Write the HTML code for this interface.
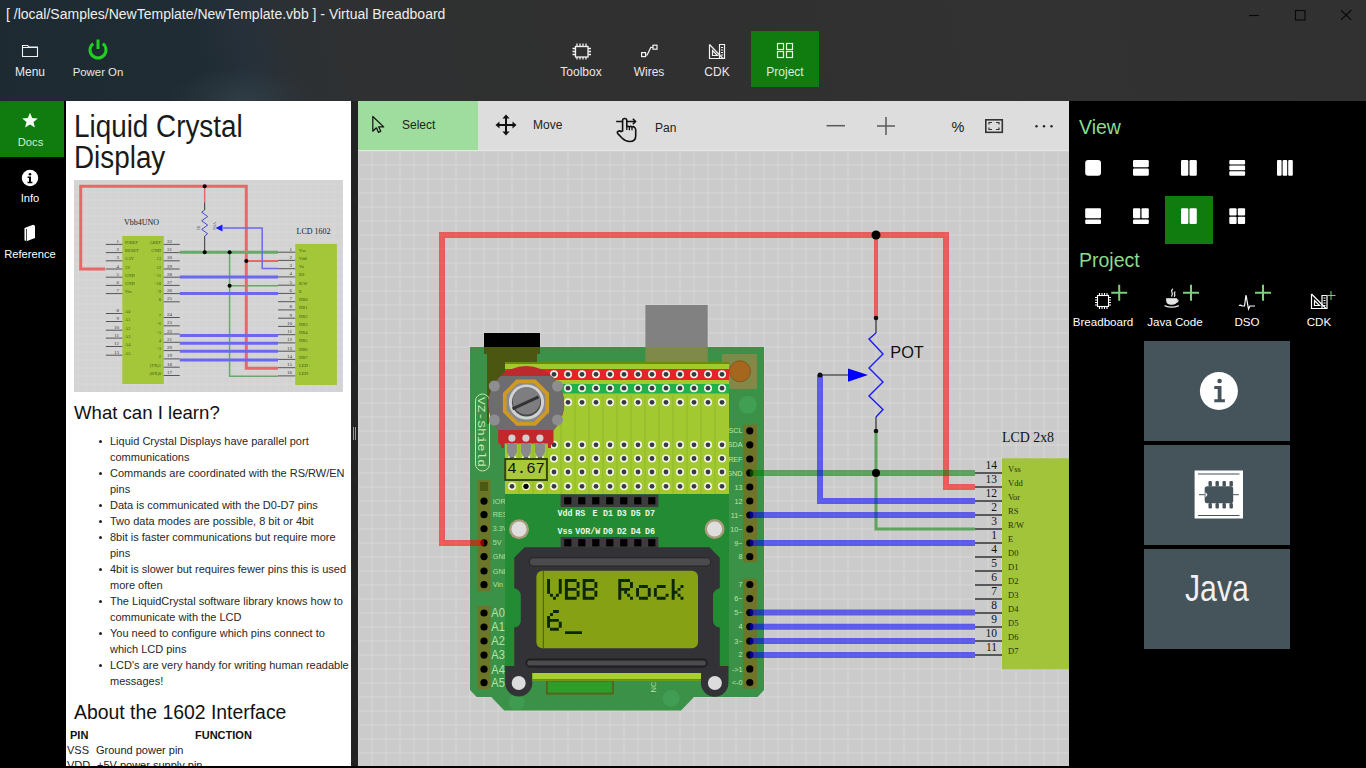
<!DOCTYPE html>
<html><head><meta charset="utf-8">
<style>
*{box-sizing:border-box}
html,body{margin:0;padding:0}
body{width:1366px;height:768px;overflow:hidden;position:relative;background:#000;font-family:"Liberation Sans",sans-serif}
.a{position:absolute}
#top{left:0;top:0;width:1366px;height:101px;
background:
 radial-gradient(ellipse 70px 30px at 240px 98px, rgba(80,100,105,.25), rgba(0,0,0,0)),
 linear-gradient(80deg,#1e2a31 0px,#202c33 200px,#25303a 250px,#2c3033 300px,#2f3031 380px,#303030 700px,#323232 1000px,#313131 1366px);}
.tt{color:#eee;white-space:nowrap}
.tb{color:#e8e8e8;font-size:12px;white-space:nowrap;text-align:center}
#nav{left:0;top:101px;width:64px;height:665px;background:#000}
#docs{left:66px;top:101px;width:285px;height:665px;background:#fff;overflow:hidden;color:#111}
#div{left:351px;top:101px;width:7px;height:665px;background:#232323}
#cv{left:358px;top:101px;width:711px;height:665px;overflow:hidden;background:#cbcbcb}
#rp{left:1069px;top:101px;width:297px;height:665px;background:#000}
.li{position:absolute;left:44px;font-size:11px;color:#282828;white-space:nowrap}
.bu{position:absolute;left:33px;width:3px;height:3px;border-radius:50%;background:#222}
</style></head><body>
<div id="top" class="a">
  <div class="a tt" style="left:6px;top:5px;font-size:14px;line-height:18px">[ /local/Samples/NewTemplate/NewTemplate.vbb ] - Virtual Breadboard</div>
  <svg class="a" style="left:1240px;top:0" width="126" height="30" viewBox="1240 0 126 30">
    <path d="M1249 15.5h10" stroke="#0a0a0a" stroke-width="1.2"/>
    <rect x="1295.5" y="10.5" width="9.5" height="9.5" fill="none" stroke="#0a0a0a" stroke-width="1.2"/>
    <path d="M1341 10.3l10.3 9.6M1351.3 10.3l-10.3 9.6" stroke="#0a0a0a" stroke-width="1.2"/>
  </svg>
  <!-- Menu -->
  <svg class="a" style="left:20px;top:42px" width="20" height="18" viewBox="20 42 20 18">
    <path d="M22.5 56.5V45.5h5l1.5 1.5h8.5v9.5z M22.5 47.5h15" fill="none" stroke="#f0f0f0" stroke-width="1.1"/>
  </svg>
  <div class="a tb" style="left:0;top:65px;width:60px;line-height:14px">Menu</div>
  <!-- Power -->
  <svg class="a" style="left:86px;top:37px" width="24" height="24" viewBox="86 37 24 24">
    <path d="M93.2 43.6A8 8 0 1 0 102.8 43.6" fill="none" stroke="#22d022" stroke-width="3"/>
    <path d="M98 39.5v9.5" stroke="#22d022" stroke-width="3"/>
  </svg>
  <div class="a tb" style="left:64px;top:65px;width:68px;line-height:14px;font-size:11.4px">Power On</div>
  <!-- Project highlight -->
  <div class="a" style="left:751px;top:31px;width:68px;height:56px;background:#107c10"></div>
  <svg class="a" style="left:560px;top:38px" width="250" height="26" viewBox="560 38 250 26">
    <!-- toolbox chip -->
    <g fill="none" stroke="#f2f2f2" stroke-width="1.3">
      <rect x="575.5" y="46.5" width="12.5" height="10.5"/>
      <path d="M577 43.5v3M580 43.5v3M583 43.5v3M586 43.5v3 M577 57v2.5M580 57v2.5M583 57v2.5M586 57v2.5 M572.5 48.5h3M572.5 51.5h3M572.5 54.5h3 M588 48.5h3M588 51.5h3M588 54.5h3"/>
    </g>
    <!-- wires -->
    <g fill="none" stroke="#f2f2f2" stroke-width="1.2">
      <rect x="641.6" y="52.6" width="4" height="4"/>
      <rect x="653" y="45.2" width="4" height="4"/>
      <path d="M645.6 55h1.6l3.6-7.6h2.2"/>
    </g>
    <!-- CDK -->
    <g fill="none" stroke="#f2f2f2" stroke-width="1.2">
      <path d="M709.5 44.5v14h15v-14h-5v14"/>
      <path d="M709.5 44.5l13.5 14"/>
      <path d="M712.5 50.5v5h5z"/>
      <path d="M721 47.5h2M721 50h2M721 52.5h2M721 55h2"/>
    </g>
    <!-- project grid -->
    <g fill="none" stroke="#eaf5ea" stroke-width="1.2">
      <rect x="777.5" y="43.5" width="6" height="6"/>
      <rect x="786.5" y="43.5" width="6" height="6"/>
      <rect x="777.5" y="51.5" width="6" height="6"/>
      <rect x="786.5" y="51.5" width="6" height="6"/>
    </g>
  </svg>
  <div class="a tb" style="left:547px;top:65px;width:68px;line-height:14px">Toolbox</div>
  <div class="a tb" style="left:615px;top:65px;width:68px;line-height:14px">Wires</div>
  <div class="a tb" style="left:683px;top:65px;width:68px;line-height:14px">CDK</div>
  <div class="a tb" style="left:751px;top:65px;width:68px;line-height:14px;color:#d8f0d8">Project</div>
</div>
<div id="nav" class="a">
  <div class="a" style="left:0;top:0;width:64px;height:56px;background:#107c10"></div>
  <svg class="a" style="left:0;top:0" width="64" height="160" viewBox="0 101 64 160">
    <path d="M30 112.8l2.2 5.2 5.6.4-4.3 3.6 1.4 5.5-4.9-3-4.9 3 1.4-5.5-4.3-3.6 5.6-.4z" fill="#f4fff4"/>
    <circle cx="30" cy="178" r="8.2" fill="#fff"/>
    <circle cx="30" cy="174.2" r="1.3" fill="#000"/>
    <path d="M27.6 176.6h3.4v5.2h1.4v1.4h-4.8v-1.4h1.4v-3.8h-1.4z" fill="#000"/>
    <path d="M24.5 228l8.5-3.2 2 .9v12.3l-8.5 3.2-2-.9z" fill="#fff"/>
    <path d="M26.5 228.9v12.2" fill="none" stroke="#000" stroke-width=".7"/>
  </svg>
  <div class="a tb" style="left:0;top:34px;width:61px;line-height:14px;font-size:11.2px;color:#d0f2d0">Docs</div>
  <div class="a tb" style="left:0;top:90px;width:60px;line-height:14px;font-size:11.2px;color:#fff">Info</div>
  <div class="a tb" style="left:0;top:146px;width:60px;line-height:14px;font-size:11.2px;color:#fff">Reference</div>
</div>
<div id="docs" class="a">
  <div class="a" style="left:8px;top:9.5px;font-size:30.6px;line-height:31px;color:#1a1a1a;white-space:nowrap;transform:scaleX(.91);transform-origin:0 0">Liquid Crystal<br>Display</div>
  <svg class="a" style="left:8px;top:79px" width="269" height="212" viewBox="74 180 269 212" id="sch"><rect x="74" y="180" width="269" height="212" fill="#d3d3d3"/><path d="M78 180v212M86 180v212M94 180v212M102 180v212M110 180v212M118 180v212M126 180v212M134 180v212M142 180v212M150 180v212M158 180v212M166 180v212M174 180v212M182 180v212M190 180v212M198 180v212M206 180v212M214 180v212M222 180v212M230 180v212M238 180v212M246 180v212M254 180v212M262 180v212M270 180v212M278 180v212M286 180v212M294 180v212M302 180v212M310 180v212M318 180v212M326 180v212M334 180v212M342 180v212M74 184h269M74 192h269M74 200h269M74 208h269M74 216h269M74 224h269M74 232h269M74 240h269M74 248h269M74 256h269M74 264h269M74 272h269M74 280h269M74 288h269M74 296h269M74 304h269M74 312h269M74 320h269M74 328h269M74 336h269M74 344h269M74 352h269M74 360h269M74 368h269M74 376h269M74 384h269" stroke="#dcdcdc" stroke-width=".6"/><rect x="122.3" y="236" width="41.5" height="148" fill="#a4c639"/><rect x="295.2" y="244" width="41.7" height="141" fill="#a4c639"/><path d="M105.9 244.4H122.3M105.9 252.6H122.3M105.9 260.8H122.3M105.9 269.0H122.3M105.9 277.2H122.3M105.9 285.4H122.3M105.9 293.6H122.3M105.9 313.5H122.3M105.9 321.5H122.3M105.9 330.2H122.3M105.9 338.1H122.3M105.9 346.5H122.3M105.9 355.2H122.3M163.8 244.4H179.7M163.8 252.6H179.7M163.8 260.8H179.7M163.8 269.0H179.7M163.8 277.2H179.7M163.8 285.4H179.7M163.8 293.6H179.7M163.8 301.8H179.7M163.8 317.5H179.7M163.8 325.8H179.7M163.8 334.0H179.7M163.8 342.3H179.7M163.8 350.6H179.7M163.8 358.9H179.7M163.8 367.2H179.7M163.8 375.5H179.7M278 252.2H295.2M278 260.4H295.2M278 268.7H295.2M278 276.9H295.2M278 285.2H295.2M278 293.4H295.2M278 301.7H295.2M278 309.9H295.2M278 318.2H295.2M278 326.4H295.2M278 334.7H295.2M278 342.9H295.2M278 351.2H295.2M278 359.4H295.2M278 367.7H295.2M278 375.9H295.2" stroke="#555" stroke-width="1"/><g font-family="Liberation Serif" font-size="5" fill="#333"><text x="119" y="242.9" text-anchor="end">1</text><text x="119" y="251.1" text-anchor="end">2</text><text x="119" y="259.3" text-anchor="end">3</text><text x="119" y="267.5" text-anchor="end">4</text><text x="119" y="275.7" text-anchor="end">5</text><text x="119" y="283.9" text-anchor="end">6</text><text x="119" y="292.1" text-anchor="end">7</text><text x="119" y="312.0" text-anchor="end">8</text><text x="119" y="320.0" text-anchor="end">9</text><text x="119" y="328.7" text-anchor="end">10</text><text x="119" y="336.6" text-anchor="end">11</text><text x="119" y="345.0" text-anchor="end">12</text><text x="119" y="353.7" text-anchor="end">13</text><text x="167" y="242.9">32</text><text x="167" y="251.1">31</text><text x="167" y="259.3">30</text><text x="167" y="267.5">29</text><text x="167" y="275.7">28</text><text x="167" y="283.9">27</text><text x="167" y="292.1">26</text><text x="167" y="300.3">25</text><text x="167" y="316.0">24</text><text x="167" y="324.3">23</text><text x="167" y="332.5">22</text><text x="167" y="340.8">21</text><text x="167" y="349.1">20</text><text x="167" y="357.4">19</text><text x="167" y="365.7">18</text><text x="167" y="374.0">17</text><text x="292" y="250.7" text-anchor="end">1</text><text x="292" y="258.9" text-anchor="end">2</text><text x="292" y="267.2" text-anchor="end">3</text><text x="292" y="275.4" text-anchor="end">4</text><text x="292" y="283.7" text-anchor="end">5</text><text x="292" y="291.9" text-anchor="end">6</text><text x="292" y="300.2" text-anchor="end">7</text><text x="292" y="308.4" text-anchor="end">8</text><text x="292" y="316.7" text-anchor="end">9</text><text x="292" y="324.9" text-anchor="end">10</text><text x="292" y="333.2" text-anchor="end">11</text><text x="292" y="341.4" text-anchor="end">12</text><text x="292" y="349.7" text-anchor="end">13</text><text x="292" y="357.9" text-anchor="end">14</text><text x="292" y="366.2" text-anchor="end">15</text><text x="292" y="374.4" text-anchor="end">16</text></g><g font-family="Liberation Serif" font-size="4.5" fill="#3a5a10"><text x="125" y="243.9">IOREF</text><text x="125" y="252.1">RESET</text><text x="125" y="260.3">3.3V</text><text x="125" y="268.5">5V</text><text x="125" y="276.7">GND</text><text x="125" y="284.9">GND</text><text x="125" y="293.1">Vin</text><text x="125" y="313.0">A0</text><text x="125" y="321.0">A1</text><text x="125" y="329.7">A2</text><text x="125" y="337.6">A3</text><text x="125" y="346.0">A4</text><text x="125" y="354.7">A5</text><text x="161" y="243.9" text-anchor="end">AREF</text><text x="161" y="252.1" text-anchor="end">GND</text><text x="161" y="260.3" text-anchor="end">13</text><text x="161" y="268.5" text-anchor="end">12</text><text x="161" y="276.7" text-anchor="end">~11</text><text x="161" y="284.9" text-anchor="end">~10</text><text x="161" y="293.1" text-anchor="end">~9</text><text x="161" y="301.3" text-anchor="end">8</text><text x="161" y="317.0" text-anchor="end">7</text><text x="161" y="325.3" text-anchor="end">~6</text><text x="161" y="333.5" text-anchor="end">~5</text><text x="161" y="341.8" text-anchor="end">4</text><text x="161" y="350.1" text-anchor="end">~3</text><text x="161" y="358.4" text-anchor="end">2</text><text x="161" y="366.7" text-anchor="end">(TX)1</text><text x="161" y="375.0" text-anchor="end">(RX)0</text><text x="299" y="251.7">Vss</text><text x="299" y="259.9">Vdd</text><text x="299" y="268.2">Vo</text><text x="299" y="276.4">RS</text><text x="299" y="284.7">R/W</text><text x="299" y="292.9">E</text><text x="299" y="301.2">DB0</text><text x="299" y="309.4">DB1</text><text x="299" y="317.7">DB2</text><text x="299" y="325.9">DB3</text><text x="299" y="334.2">DB4</text><text x="299" y="342.4">DB5</text><text x="299" y="350.7">DB6</text><text x="299" y="358.9">DB7</text><text x="299" y="367.2">LED+</text><text x="299" y="375.4">LED-</text></g><text x="141.6" y="225" font-family="Liberation Serif" font-size="8" fill="#222" text-anchor="middle">Vbb4UNO</text><text x="313.5" y="233.5" font-family="Liberation Serif" font-size="8" fill="#222" text-anchor="middle">LCD 1602</text><path d="M105.2 268.9H80.7V186.2H246.3V368.3H278" fill="none" stroke="#e8686a" stroke-width="3"/><path d="M246.3 261H278" stroke="#e8686a" stroke-width="2"/><path d="M204.7 186.2V202.5" stroke="#e8686a" stroke-width="1.5"/><path d="M204.7 202.5V210M204.7 236V252" stroke="#333" stroke-width="1"/><path d="M204.7 210l-3 2.2 6 4.3-6 4.3 6 4.3-6 4.3 6 4.3-3 2.3" fill="none" stroke="#3535d8" stroke-width=".9"/><path d="M179.7 252.2H278" stroke="#6aa86a" stroke-width="3"/><path d="M229.6 252.2V376.3H278M229.6 285.7H278" fill="none" stroke="#6aa86a" stroke-width="1.5"/><path d="M223 228H262.2V268.6H278" fill="none" stroke="#6b68ee" stroke-width="1.5"/><path d="M215.5 228l7-3.5v7z" fill="#1a1aff"/><path d="M179.7 277H278" stroke="#6b68ee" stroke-width="3"/><path d="M179.7 293.6H278" stroke="#6b68ee" stroke-width="3"/><path d="M179.7 335.4H278" stroke="#6b68ee" stroke-width="3"/><path d="M179.7 343.3H278" stroke="#6b68ee" stroke-width="3"/><path d="M179.7 351.3H278" stroke="#6b68ee" stroke-width="3"/><path d="M179.7 360H278" stroke="#6b68ee" stroke-width="3"/><text x="197" y="226" font-family="Liberation Serif" font-size="4" fill="#444" transform="rotate(90 197 226)">R1</text><text x="213" y="222" font-family="Liberation Serif" font-size="4" fill="#444" transform="rotate(90 213 222)">VPot</text><circle cx="204.7" cy="186.2" r="2" fill="#000"/><circle cx="204.7" cy="252.2" r="2" fill="#000"/><circle cx="229.6" cy="252.2" r="2" fill="#000"/><circle cx="246.3" cy="261" r="2" fill="#000"/><circle cx="229.6" cy="285.7" r="2" fill="#000"/></svg>
  <div class="a" style="left:8px;top:301px;font-size:18.6px;line-height:22px;color:#111;white-space:nowrap">What can I learn?</div>
  <div class="li" style="top:332px;line-height:16px">Liquid Crystal Displays have parallel port</div>
  <div class="bu" style="top:339px"></div>
  <div class="li" style="top:348px;line-height:16px">communications</div>
  <div class="li" style="top:364px;line-height:16px">Commands are coordinated with the RS/RW/EN</div>
  <div class="bu" style="top:371px"></div>
  <div class="li" style="top:380px;line-height:16px">pins</div>
  <div class="li" style="top:396px;line-height:16px">Data is communicated with the D0-D7 pins</div>
  <div class="bu" style="top:403px"></div>
  <div class="li" style="top:412px;line-height:16px">Two data modes are possible, 8 bit or 4bit</div>
  <div class="bu" style="top:419px"></div>
  <div class="li" style="top:428px;line-height:16px">8bit is faster communications but require more</div>
  <div class="bu" style="top:435px"></div>
  <div class="li" style="top:444px;line-height:16px">pins</div>
  <div class="li" style="top:460px;line-height:16px">4bit is slower but requires fewer pins this is used</div>
  <div class="bu" style="top:467px"></div>
  <div class="li" style="top:476px;line-height:16px">more often</div>
  <div class="li" style="top:492px;line-height:16px">The LiquidCrystal software library knows how to</div>
  <div class="bu" style="top:499px"></div>
  <div class="li" style="top:508px;line-height:16px">communicate with the LCD</div>
  <div class="li" style="top:524px;line-height:16px">You need to configure which pins connect to</div>
  <div class="bu" style="top:531px"></div>
  <div class="li" style="top:540px;line-height:16px">which LCD pins</div>
  <div class="li" style="top:556px;line-height:16px">LCD&#39;s are very handy for writing human readable</div>
  <div class="bu" style="top:563px"></div>
  <div class="li" style="top:572px;line-height:16px">messages!</div>
  <div class="a" style="left:8px;top:600px;font-size:19.4px;line-height:22px;color:#111;white-space:nowrap">About the 1602 Interface</div>
  <div class="a" style="left:4px;top:627px;font-size:11px;line-height:14px;font-weight:bold;color:#111;white-space:nowrap">PIN</div>
  <div class="a" style="left:129px;top:627px;font-size:11px;line-height:14px;font-weight:bold;color:#111;white-space:nowrap">FUNCTION</div>
  <div class="a" style="left:1px;top:642px;font-size:11px;line-height:14px;color:#222;white-space:nowrap">VSS</div><div class="a" style="left:30px;top:642px;font-size:11px;line-height:14px;color:#222;white-space:nowrap">Ground power pin</div>
  <div class="a" style="left:1px;top:657px;font-size:11px;line-height:14px;color:#222;white-space:nowrap">VDD</div><div class="a" style="left:31px;top:657px;font-size:11px;line-height:14px;color:#222;white-space:nowrap">+5V power supply pin</div>
</div>
<div id="div" class="a"><div class="a" style="left:1.5px;top:326px;width:1px;height:13px;background:#9a9a9a"></div><div class="a" style="left:4px;top:326px;width:1px;height:13px;background:#9a9a9a"></div></div>
<div id="cv" class="a">
<div class="a" style="left:0;top:0;width:711px;height:50px;background:#dddddd"></div>
<div class="a" style="left:0;top:0;width:120px;height:50px;background:#9fdd9f"></div>
<div class="a" style="left:0;top:49px;width:711px;height:1.5px;background:#e6e6e6"></div>
<svg class="a" style="left:0;top:0" width="711" height="50" viewBox="358 101 711 50">
<path d="M372.8 116.5V131.2l3.6-3.4 2.1 4.6 2.3-1.1-2.1-4.4h5z" fill="none" stroke="#111" stroke-width="1.2" stroke-linejoin="round"/>
<g stroke="#111" stroke-width="2" fill="none"><path d="M506 116v18M497 125h18"/></g>
<g fill="#111"><path d="M506 114.5l-3.6 4h7.2z"/><path d="M506 135.5l-3.6-4h7.2z"/><path d="M495.5 125l4-3.6v7.2z"/><path d="M516.5 125l-4-3.6v7.2z"/></g>
<path d="M616.2 121.5H635.3M632.8 118.8l2.8 2.7-2.8 2.7" fill="none" stroke="#111" stroke-width="1.5"/>
<path d="M622.6 131V120.6A2.1 2.1 0 0 1 626.8 120.6V126.8Q628 125.8 629.4 126.8Q630.6 125.9 632 127Q633.4 126.2 634.6 127.5Q635.7 128 635.7 130V136Q635.7 141.5 629.5 141.5Q625.5 141.5 622 138L617.8 133.6Q616.6 132 618.3 131.2Q620 130.5 621 131.6Z" fill="#dddddd" stroke="#111" stroke-width="1.6" stroke-linejoin="round"/>
<path d="M626.8 126.5v3.6M629.4 127v3.2M632 127.2v3" stroke="#111" stroke-width="1.3"/>
<g stroke="#5a5a5a" stroke-width="1.5"><path d="M826.5 125.7h18.5"/><path d="M877 126h18M886 117v18"/></g>
<rect x="985.8" y="119.8" width="16.5" height="12.5" fill="none" stroke="#333" stroke-width="1.6"/>
<path d="M989 124.5v-2h3M999 124.5v-2h-3M989 127.5v2h3M999 127.5v2h-3" fill="none" stroke="#333" stroke-width="1.2"/>
<g fill="#222"><circle cx="1036.5" cy="126.3" r="1.2"/><circle cx="1044" cy="126.3" r="1.2"/><circle cx="1051.5" cy="126.3" r="1.2"/></g>
</svg>
<div class="a" style="left:44px;top:17px;font-size:12px;line-height:14px;color:#222;white-space:nowrap">Select</div>
<div class="a" style="left:175px;top:17px;font-size:12px;line-height:14px;color:#222;white-space:nowrap">Move</div>
<div class="a" style="left:297px;top:20px;font-size:12px;line-height:14px;color:#222;white-space:nowrap">Pan</div>
<div class="a" style="left:593.5px;top:17.5px;font-size:14.5px;line-height:16px;color:#222;white-space:nowrap">%</div>
<div class="a" style="left:0;top:50px;width:711px;height:615px;background-color:#cbcbcb;background-image:linear-gradient(90deg,#d7d7d7 1.3px,transparent 1.3px),linear-gradient(#d7d7d7 1.3px,transparent 1.3px);background-size:14px 14px;background-position:-0.5px -0.5px"></div>
<svg class="a" style="left:0;top:50px" width="711" height="615" viewBox="358 151 711 615">
<defs><clipPath id="cpb"><rect x="358" y="151" width="711" height="615"/></clipPath></defs>
<rect x="484" y="333" width="56" height="14" fill="#000"/>
<rect x="645.4" y="305" width="62.3" height="42" fill="#818181"/>
<path d="M470 347H764V690L757.5 697H694L681 710.5H504.3L491.2 697H476.7L470 690Z" fill="#3b9147"/>
<rect x="645.4" y="347" width="62.3" height="15" fill="#7f8a48"/>
<rect x="484" y="347" width="56" height="7" fill="#4b5710"/>
<rect x="487" y="354" width="50" height="70" fill="#4b5710"/>
<rect x="722" y="354" width="35" height="35" fill="#7f8a48"/>
<circle cx="740" cy="371.3" r="10.5" fill="#a5661e" stroke="#86561a" stroke-width="1"/>
<circle cx="747.8" cy="404.8" r="9" fill="#45a85c" opacity=".6"/>
<circle cx="516.8" cy="702" r="8" fill="#45a85c" opacity=".45"/>
<circle cx="671.2" cy="698.6" r="8.5" fill="#45a85c" opacity=".55"/>
<rect x="475.5" y="394" width="14" height="77" rx="7" fill="none" stroke="#bfe8a8" stroke-width="1"/>
<text x="0" y="0" transform="translate(478.3 397) rotate(90)" font-family="Liberation Mono" font-size="11" fill="#c6ecb0" textLength="70" lengthAdjust="spacingAndGlyphs">VZ-Shield</text>
<rect x="477.5" y="480" width="13" height="111" fill="#6c7628"/>
<rect x="480" y="482" width="8" height="9" fill="#4a5a12"/>
<circle cx="484" cy="501.1" r="3.6" fill="#000"/>
<circle cx="484" cy="514.7" r="3.6" fill="#000"/>
<circle cx="484" cy="528.75" r="3.6" fill="#000"/>
<circle cx="484" cy="542.8" r="3.6" fill="#000"/>
<circle cx="484" cy="556.6" r="3.6" fill="#000"/>
<circle cx="484" cy="571" r="3.6" fill="#000"/>
<circle cx="484" cy="584.7" r="3.6" fill="#000"/>
<rect x="477.5" y="606" width="13" height="83" fill="#6c7628"/>
<circle cx="484" cy="613" r="3.6" fill="#000"/>
<circle cx="484" cy="627" r="3.6" fill="#000"/>
<circle cx="484" cy="641" r="3.6" fill="#000"/>
<circle cx="484" cy="655.1" r="3.6" fill="#000"/>
<circle cx="484" cy="669.2" r="3.6" fill="#000"/>
<circle cx="484" cy="682.7" r="3.6" fill="#000"/>
<text x="492.8" y="503.70000000000005" font-family="Liberation Sans" font-size="7.2" fill="#b5e0a0">IOREF</text>
<text x="492.8" y="517.3000000000001" font-family="Liberation Sans" font-size="7.2" fill="#b5e0a0">RESET</text>
<text x="492.8" y="531.35" font-family="Liberation Sans" font-size="7.2" fill="#b5e0a0">3.3V</text>
<text x="492.8" y="545.4" font-family="Liberation Sans" font-size="7.2" fill="#b5e0a0">5V</text>
<text x="492.8" y="559.2" font-family="Liberation Sans" font-size="7.2" fill="#b5e0a0">GND</text>
<text x="492.8" y="573.6" font-family="Liberation Sans" font-size="7.2" fill="#b5e0a0">GND</text>
<text x="492.8" y="587.3000000000001" font-family="Liberation Sans" font-size="7.2" fill="#b5e0a0">Vin</text>
<text x="491.3" y="617.3" font-family="Liberation Sans" font-size="12" fill="#b5e5a5" textLength="13.5" lengthAdjust="spacingAndGlyphs">A0</text>
<text x="491.3" y="631.3" font-family="Liberation Sans" font-size="12" fill="#b5e5a5" textLength="13.5" lengthAdjust="spacingAndGlyphs">A1</text>
<text x="491.3" y="645.3" font-family="Liberation Sans" font-size="12" fill="#b5e5a5" textLength="13.5" lengthAdjust="spacingAndGlyphs">A2</text>
<text x="491.3" y="659.4" font-family="Liberation Sans" font-size="12" fill="#b5e5a5" textLength="13.5" lengthAdjust="spacingAndGlyphs">A3</text>
<text x="491.3" y="673.5" font-family="Liberation Sans" font-size="12" fill="#b5e5a5" textLength="13.5" lengthAdjust="spacingAndGlyphs">A4</text>
<text x="491.3" y="687.0" font-family="Liberation Sans" font-size="12" fill="#b5e5a5" textLength="13.5" lengthAdjust="spacingAndGlyphs">A5</text>
<rect x="505" y="362" width="224" height="319" fill="#248b35"/>
<rect x="743" y="424.6" width="14" height="137.7" fill="#6c7628"/>
<rect x="743" y="578.7" width="14" height="110" fill="#6c7628"/>
<circle cx="749.8" cy="430.8" r="3.6" fill="#000"/>
<circle cx="749.8" cy="444.8" r="3.6" fill="#000"/>
<circle cx="749.8" cy="459" r="3.6" fill="#000"/>
<circle cx="749.8" cy="472.9" r="3.6" fill="#000"/>
<circle cx="749.8" cy="487" r="3.6" fill="#000"/>
<circle cx="749.8" cy="501" r="3.6" fill="#000"/>
<circle cx="749.8" cy="515" r="3.6" fill="#000"/>
<circle cx="749.8" cy="529.2" r="3.6" fill="#000"/>
<circle cx="749.8" cy="543" r="3.6" fill="#000"/>
<circle cx="749.8" cy="556.7" r="3.6" fill="#000"/>
<circle cx="749.8" cy="584.5" r="3.6" fill="#000"/>
<circle cx="749.8" cy="598.6" r="3.6" fill="#000"/>
<circle cx="749.8" cy="612.6" r="3.6" fill="#000"/>
<circle cx="749.8" cy="626.7" r="3.6" fill="#000"/>
<circle cx="749.8" cy="641.2" r="3.6" fill="#000"/>
<circle cx="749.8" cy="654.8" r="3.6" fill="#000"/>
<circle cx="749.8" cy="668.9" r="3.6" fill="#000"/>
<circle cx="749.8" cy="682.5" r="3.6" fill="#000"/>
<text x="742.5" y="433.40000000000003" text-anchor="end" font-family="Liberation Sans" font-size="7.2" fill="#bde6aa">SCL</text>
<text x="742.5" y="447.40000000000003" text-anchor="end" font-family="Liberation Sans" font-size="7.2" fill="#bde6aa">SDA</text>
<text x="742.5" y="461.6" text-anchor="end" font-family="Liberation Sans" font-size="7.2" fill="#bde6aa">REF</text>
<text x="742.5" y="475.5" text-anchor="end" font-family="Liberation Sans" font-size="7.2" fill="#bde6aa">GND</text>
<text x="742.5" y="489.6" text-anchor="end" font-family="Liberation Sans" font-size="7.2" fill="#bde6aa">13</text>
<text x="742.5" y="503.6" text-anchor="end" font-family="Liberation Sans" font-size="7.2" fill="#bde6aa">12</text>
<text x="742.5" y="517.6" text-anchor="end" font-family="Liberation Sans" font-size="7.2" fill="#bde6aa">11~</text>
<text x="742.5" y="531.8000000000001" text-anchor="end" font-family="Liberation Sans" font-size="7.2" fill="#bde6aa">10~</text>
<text x="742.5" y="545.6" text-anchor="end" font-family="Liberation Sans" font-size="7.2" fill="#bde6aa">9~</text>
<text x="742.5" y="559.3000000000001" text-anchor="end" font-family="Liberation Sans" font-size="7.2" fill="#bde6aa">8</text>
<text x="742.5" y="587.1" text-anchor="end" font-family="Liberation Sans" font-size="7.2" fill="#bde6aa">7</text>
<text x="742.5" y="601.2" text-anchor="end" font-family="Liberation Sans" font-size="7.2" fill="#bde6aa">6~</text>
<text x="742.5" y="615.2" text-anchor="end" font-family="Liberation Sans" font-size="7.2" fill="#bde6aa">5~</text>
<text x="742.5" y="629.3000000000001" text-anchor="end" font-family="Liberation Sans" font-size="7.2" fill="#bde6aa">4</text>
<text x="742.5" y="643.8000000000001" text-anchor="end" font-family="Liberation Sans" font-size="7.2" fill="#bde6aa">3~</text>
<text x="742.5" y="657.4" text-anchor="end" font-family="Liberation Sans" font-size="7.2" fill="#bde6aa">2</text>
<text x="742.5" y="671.5" text-anchor="end" font-family="Liberation Sans" font-size="7.2" fill="#bde6aa">-&gt;1</text>
<text x="742.5" y="685.1" text-anchor="end" font-family="Liberation Sans" font-size="7.2" fill="#bde6aa">&lt;-0</text>
<rect x="505" y="362" width="224" height="132" fill="#a3c931"/>
<rect x="505" y="362" width="224" height="2" fill="#6a8a12"/>
<rect x="505" y="369" width="224" height="11" fill="#e82228"/>
<rect x="505" y="384" width="224" height="9.5" fill="#22b04a"/>
<path d="M519 395V494M533 395V494M547 395V494M561 395V494M575 395V494M589 395V494M603 395V494M617 395V494M631 395V494M645 395V494M659 395V494M673 395V494M687 395V494M701 395V494M715 395V494" stroke="#8fb82a" stroke-width="1"/>
<circle cx="512" cy="374.3" r="4" fill="#f5f5e6"/><circle cx="512" cy="374.3" r="2.4" fill="#363a46"/>
<circle cx="526" cy="374.3" r="4" fill="#f5f5e6"/><circle cx="526" cy="374.3" r="2.4" fill="#363a46"/>
<circle cx="540" cy="374.3" r="4" fill="#f5f5e6"/><circle cx="540" cy="374.3" r="2.4" fill="#363a46"/>
<circle cx="554" cy="374.3" r="4" fill="#f5f5e6"/><circle cx="554" cy="374.3" r="2.4" fill="#363a46"/>
<circle cx="568" cy="374.3" r="4" fill="#f5f5e6"/><circle cx="568" cy="374.3" r="2.4" fill="#363a46"/>
<circle cx="582" cy="374.3" r="4" fill="#f5f5e6"/><circle cx="582" cy="374.3" r="2.4" fill="#363a46"/>
<circle cx="596" cy="374.3" r="4" fill="#f5f5e6"/><circle cx="596" cy="374.3" r="2.4" fill="#363a46"/>
<circle cx="610" cy="374.3" r="4" fill="#f5f5e6"/><circle cx="610" cy="374.3" r="2.4" fill="#363a46"/>
<circle cx="624" cy="374.3" r="4" fill="#f5f5e6"/><circle cx="624" cy="374.3" r="2.4" fill="#363a46"/>
<circle cx="638" cy="374.3" r="4" fill="#f5f5e6"/><circle cx="638" cy="374.3" r="2.4" fill="#363a46"/>
<circle cx="652" cy="374.3" r="4" fill="#f5f5e6"/><circle cx="652" cy="374.3" r="2.4" fill="#363a46"/>
<circle cx="666" cy="374.3" r="4" fill="#f5f5e6"/><circle cx="666" cy="374.3" r="2.4" fill="#363a46"/>
<circle cx="680" cy="374.3" r="4" fill="#f5f5e6"/><circle cx="680" cy="374.3" r="2.4" fill="#363a46"/>
<circle cx="694" cy="374.3" r="4" fill="#f5f5e6"/><circle cx="694" cy="374.3" r="2.4" fill="#363a46"/>
<circle cx="708" cy="374.3" r="4" fill="#f5f5e6"/><circle cx="708" cy="374.3" r="2.4" fill="#363a46"/>
<circle cx="722" cy="374.3" r="4" fill="#f5f5e6"/><circle cx="722" cy="374.3" r="2.4" fill="#363a46"/>
<circle cx="512" cy="388.2" r="4" fill="#f5f5e6"/><circle cx="512" cy="388.2" r="2.4" fill="#363a46"/>
<circle cx="526" cy="388.2" r="4" fill="#f5f5e6"/><circle cx="526" cy="388.2" r="2.4" fill="#363a46"/>
<circle cx="540" cy="388.2" r="4" fill="#f5f5e6"/><circle cx="540" cy="388.2" r="2.4" fill="#363a46"/>
<circle cx="554" cy="388.2" r="4" fill="#f5f5e6"/><circle cx="554" cy="388.2" r="2.4" fill="#363a46"/>
<circle cx="568" cy="388.2" r="4" fill="#f5f5e6"/><circle cx="568" cy="388.2" r="2.4" fill="#363a46"/>
<circle cx="582" cy="388.2" r="4" fill="#f5f5e6"/><circle cx="582" cy="388.2" r="2.4" fill="#363a46"/>
<circle cx="596" cy="388.2" r="4" fill="#f5f5e6"/><circle cx="596" cy="388.2" r="2.4" fill="#363a46"/>
<circle cx="610" cy="388.2" r="4" fill="#f5f5e6"/><circle cx="610" cy="388.2" r="2.4" fill="#363a46"/>
<circle cx="624" cy="388.2" r="4" fill="#f5f5e6"/><circle cx="624" cy="388.2" r="2.4" fill="#363a46"/>
<circle cx="638" cy="388.2" r="4" fill="#f5f5e6"/><circle cx="638" cy="388.2" r="2.4" fill="#363a46"/>
<circle cx="652" cy="388.2" r="4" fill="#f5f5e6"/><circle cx="652" cy="388.2" r="2.4" fill="#363a46"/>
<circle cx="666" cy="388.2" r="4" fill="#f5f5e6"/><circle cx="666" cy="388.2" r="2.4" fill="#363a46"/>
<circle cx="680" cy="388.2" r="4" fill="#f5f5e6"/><circle cx="680" cy="388.2" r="2.4" fill="#363a46"/>
<circle cx="694" cy="388.2" r="4" fill="#f5f5e6"/><circle cx="694" cy="388.2" r="2.4" fill="#363a46"/>
<circle cx="708" cy="388.2" r="4" fill="#f5f5e6"/><circle cx="708" cy="388.2" r="2.4" fill="#363a46"/>
<circle cx="722" cy="388.2" r="4" fill="#f5f5e6"/><circle cx="722" cy="388.2" r="2.4" fill="#363a46"/>
<circle cx="512" cy="402.3" r="4" fill="#f5f5e6"/><circle cx="512" cy="402.3" r="2.4" fill="#363a46"/>
<circle cx="526" cy="402.3" r="4" fill="#f5f5e6"/><circle cx="526" cy="402.3" r="2.4" fill="#363a46"/>
<circle cx="540" cy="402.3" r="4" fill="#f5f5e6"/><circle cx="540" cy="402.3" r="2.4" fill="#363a46"/>
<circle cx="554" cy="402.3" r="4" fill="#f5f5e6"/><circle cx="554" cy="402.3" r="2.4" fill="#363a46"/>
<circle cx="568" cy="402.3" r="4" fill="#f5f5e6"/><circle cx="568" cy="402.3" r="2.4" fill="#363a46"/>
<circle cx="582" cy="402.3" r="4" fill="#f5f5e6"/><circle cx="582" cy="402.3" r="2.4" fill="#363a46"/>
<circle cx="596" cy="402.3" r="4" fill="#f5f5e6"/><circle cx="596" cy="402.3" r="2.4" fill="#363a46"/>
<circle cx="610" cy="402.3" r="4" fill="#f5f5e6"/><circle cx="610" cy="402.3" r="2.4" fill="#363a46"/>
<circle cx="624" cy="402.3" r="4" fill="#f5f5e6"/><circle cx="624" cy="402.3" r="2.4" fill="#363a46"/>
<circle cx="638" cy="402.3" r="4" fill="#f5f5e6"/><circle cx="638" cy="402.3" r="2.4" fill="#363a46"/>
<circle cx="652" cy="402.3" r="4" fill="#f5f5e6"/><circle cx="652" cy="402.3" r="2.4" fill="#363a46"/>
<circle cx="666" cy="402.3" r="4" fill="#f5f5e6"/><circle cx="666" cy="402.3" r="2.4" fill="#363a46"/>
<circle cx="680" cy="402.3" r="4" fill="#f5f5e6"/><circle cx="680" cy="402.3" r="2.4" fill="#363a46"/>
<circle cx="694" cy="402.3" r="4" fill="#f5f5e6"/><circle cx="694" cy="402.3" r="2.4" fill="#363a46"/>
<circle cx="708" cy="402.3" r="4" fill="#f5f5e6"/><circle cx="708" cy="402.3" r="2.4" fill="#363a46"/>
<circle cx="722" cy="402.3" r="4" fill="#f5f5e6"/><circle cx="722" cy="402.3" r="2.4" fill="#363a46"/>
<circle cx="512" cy="444.8" r="4" fill="#f5f5e6"/><circle cx="512" cy="444.8" r="2.4" fill="#363a46"/>
<circle cx="526" cy="444.8" r="4" fill="#f5f5e6"/><circle cx="526" cy="444.8" r="2.4" fill="#363a46"/>
<circle cx="540" cy="444.8" r="4" fill="#f5f5e6"/><circle cx="540" cy="444.8" r="2.4" fill="#363a46"/>
<circle cx="554" cy="444.8" r="4" fill="#f5f5e6"/><circle cx="554" cy="444.8" r="2.4" fill="#363a46"/>
<circle cx="568" cy="444.8" r="4" fill="#f5f5e6"/><circle cx="568" cy="444.8" r="2.4" fill="#363a46"/>
<circle cx="582" cy="444.8" r="4" fill="#f5f5e6"/><circle cx="582" cy="444.8" r="2.4" fill="#363a46"/>
<circle cx="596" cy="444.8" r="4" fill="#f5f5e6"/><circle cx="596" cy="444.8" r="2.4" fill="#363a46"/>
<circle cx="610" cy="444.8" r="4" fill="#f5f5e6"/><circle cx="610" cy="444.8" r="2.4" fill="#363a46"/>
<circle cx="624" cy="444.8" r="4" fill="#f5f5e6"/><circle cx="624" cy="444.8" r="2.4" fill="#363a46"/>
<circle cx="638" cy="444.8" r="4" fill="#f5f5e6"/><circle cx="638" cy="444.8" r="2.4" fill="#363a46"/>
<circle cx="652" cy="444.8" r="4" fill="#f5f5e6"/><circle cx="652" cy="444.8" r="2.4" fill="#363a46"/>
<circle cx="666" cy="444.8" r="4" fill="#f5f5e6"/><circle cx="666" cy="444.8" r="2.4" fill="#363a46"/>
<circle cx="680" cy="444.8" r="4" fill="#f5f5e6"/><circle cx="680" cy="444.8" r="2.4" fill="#363a46"/>
<circle cx="694" cy="444.8" r="4" fill="#f5f5e6"/><circle cx="694" cy="444.8" r="2.4" fill="#363a46"/>
<circle cx="708" cy="444.8" r="4" fill="#f5f5e6"/><circle cx="708" cy="444.8" r="2.4" fill="#363a46"/>
<circle cx="722" cy="444.8" r="4" fill="#f5f5e6"/><circle cx="722" cy="444.8" r="2.4" fill="#363a46"/>
<circle cx="512" cy="458.5" r="4" fill="#f5f5e6"/><circle cx="512" cy="458.5" r="2.4" fill="#363a46"/>
<circle cx="526" cy="458.5" r="4" fill="#f5f5e6"/><circle cx="526" cy="458.5" r="2.4" fill="#363a46"/>
<circle cx="540" cy="458.5" r="4" fill="#f5f5e6"/><circle cx="540" cy="458.5" r="2.4" fill="#363a46"/>
<circle cx="554" cy="458.5" r="4" fill="#f5f5e6"/><circle cx="554" cy="458.5" r="2.4" fill="#363a46"/>
<circle cx="568" cy="458.5" r="4" fill="#f5f5e6"/><circle cx="568" cy="458.5" r="2.4" fill="#363a46"/>
<circle cx="582" cy="458.5" r="4" fill="#f5f5e6"/><circle cx="582" cy="458.5" r="2.4" fill="#363a46"/>
<circle cx="596" cy="458.5" r="4" fill="#f5f5e6"/><circle cx="596" cy="458.5" r="2.4" fill="#363a46"/>
<circle cx="610" cy="458.5" r="4" fill="#f5f5e6"/><circle cx="610" cy="458.5" r="2.4" fill="#363a46"/>
<circle cx="624" cy="458.5" r="4" fill="#f5f5e6"/><circle cx="624" cy="458.5" r="2.4" fill="#363a46"/>
<circle cx="638" cy="458.5" r="4" fill="#f5f5e6"/><circle cx="638" cy="458.5" r="2.4" fill="#363a46"/>
<circle cx="652" cy="458.5" r="4" fill="#f5f5e6"/><circle cx="652" cy="458.5" r="2.4" fill="#363a46"/>
<circle cx="666" cy="458.5" r="4" fill="#f5f5e6"/><circle cx="666" cy="458.5" r="2.4" fill="#363a46"/>
<circle cx="680" cy="458.5" r="4" fill="#f5f5e6"/><circle cx="680" cy="458.5" r="2.4" fill="#363a46"/>
<circle cx="694" cy="458.5" r="4" fill="#f5f5e6"/><circle cx="694" cy="458.5" r="2.4" fill="#363a46"/>
<circle cx="708" cy="458.5" r="4" fill="#f5f5e6"/><circle cx="708" cy="458.5" r="2.4" fill="#363a46"/>
<circle cx="722" cy="458.5" r="4" fill="#f5f5e6"/><circle cx="722" cy="458.5" r="2.4" fill="#363a46"/>
<circle cx="512" cy="472" r="4" fill="#f5f5e6"/><circle cx="512" cy="472" r="2.4" fill="#363a46"/>
<circle cx="526" cy="472" r="4" fill="#f5f5e6"/><circle cx="526" cy="472" r="2.4" fill="#363a46"/>
<circle cx="540" cy="472" r="4" fill="#f5f5e6"/><circle cx="540" cy="472" r="2.4" fill="#363a46"/>
<circle cx="554" cy="472" r="4" fill="#f5f5e6"/><circle cx="554" cy="472" r="2.4" fill="#363a46"/>
<circle cx="568" cy="472" r="4" fill="#f5f5e6"/><circle cx="568" cy="472" r="2.4" fill="#363a46"/>
<circle cx="582" cy="472" r="4" fill="#f5f5e6"/><circle cx="582" cy="472" r="2.4" fill="#363a46"/>
<circle cx="596" cy="472" r="4" fill="#f5f5e6"/><circle cx="596" cy="472" r="2.4" fill="#363a46"/>
<circle cx="610" cy="472" r="4" fill="#f5f5e6"/><circle cx="610" cy="472" r="2.4" fill="#363a46"/>
<circle cx="624" cy="472" r="4" fill="#f5f5e6"/><circle cx="624" cy="472" r="2.4" fill="#363a46"/>
<circle cx="638" cy="472" r="4" fill="#f5f5e6"/><circle cx="638" cy="472" r="2.4" fill="#363a46"/>
<circle cx="652" cy="472" r="4" fill="#f5f5e6"/><circle cx="652" cy="472" r="2.4" fill="#363a46"/>
<circle cx="666" cy="472" r="4" fill="#f5f5e6"/><circle cx="666" cy="472" r="2.4" fill="#363a46"/>
<circle cx="680" cy="472" r="4" fill="#f5f5e6"/><circle cx="680" cy="472" r="2.4" fill="#363a46"/>
<circle cx="694" cy="472" r="4" fill="#f5f5e6"/><circle cx="694" cy="472" r="2.4" fill="#363a46"/>
<circle cx="708" cy="472" r="4" fill="#f5f5e6"/><circle cx="708" cy="472" r="2.4" fill="#363a46"/>
<circle cx="722" cy="472" r="4" fill="#f5f5e6"/><circle cx="722" cy="472" r="2.4" fill="#363a46"/>
<circle cx="512" cy="486.3" r="4" fill="#f5f5e6"/><circle cx="512" cy="486.3" r="2.4" fill="#363a46"/>
<circle cx="526" cy="486.3" r="4" fill="#f5f5e6"/><circle cx="526" cy="486.3" r="2.4" fill="#363a46"/>
<circle cx="540" cy="486.3" r="4" fill="#f5f5e6"/><circle cx="540" cy="486.3" r="2.4" fill="#363a46"/>
<circle cx="554" cy="486.3" r="4" fill="#f5f5e6"/><circle cx="554" cy="486.3" r="2.4" fill="#363a46"/>
<circle cx="568" cy="486.3" r="4" fill="#f5f5e6"/><circle cx="568" cy="486.3" r="2.4" fill="#363a46"/>
<circle cx="582" cy="486.3" r="4" fill="#f5f5e6"/><circle cx="582" cy="486.3" r="2.4" fill="#363a46"/>
<circle cx="596" cy="486.3" r="4" fill="#f5f5e6"/><circle cx="596" cy="486.3" r="2.4" fill="#363a46"/>
<circle cx="610" cy="486.3" r="4" fill="#f5f5e6"/><circle cx="610" cy="486.3" r="2.4" fill="#363a46"/>
<circle cx="624" cy="486.3" r="4" fill="#f5f5e6"/><circle cx="624" cy="486.3" r="2.4" fill="#363a46"/>
<circle cx="638" cy="486.3" r="4" fill="#f5f5e6"/><circle cx="638" cy="486.3" r="2.4" fill="#363a46"/>
<circle cx="652" cy="486.3" r="4" fill="#f5f5e6"/><circle cx="652" cy="486.3" r="2.4" fill="#363a46"/>
<circle cx="666" cy="486.3" r="4" fill="#f5f5e6"/><circle cx="666" cy="486.3" r="2.4" fill="#363a46"/>
<circle cx="680" cy="486.3" r="4" fill="#f5f5e6"/><circle cx="680" cy="486.3" r="2.4" fill="#363a46"/>
<circle cx="694" cy="486.3" r="4" fill="#f5f5e6"/><circle cx="694" cy="486.3" r="2.4" fill="#363a46"/>
<circle cx="708" cy="486.3" r="4" fill="#f5f5e6"/><circle cx="708" cy="486.3" r="2.4" fill="#363a46"/>
<circle cx="722" cy="486.3" r="4" fill="#f5f5e6"/><circle cx="722" cy="486.3" r="2.4" fill="#363a46"/>
<circle cx="526" cy="486.3" r="2.6" fill="#000"/>
<circle cx="526.2" cy="404" r="38" fill="#bb2a2c"/>
<clipPath id="potc"><rect x="480" y="376" width="100" height="54"/></clipPath>
<circle cx="526.2" cy="404" r="37.8" fill="#6d6d6f" clip-path="url(#potc)"/>
<circle cx="494.3" cy="386" r="5.5" fill="#8e8e90"/>
<circle cx="557.5" cy="386" r="5.5" fill="#8e8e90"/>
<circle cx="494.3" cy="420" r="5.5" fill="#8e8e90"/>
<circle cx="557.5" cy="420" r="5.5" fill="#8e8e90"/>
<polygon points="549.1,412.2 535.6,425.7 516.4,425.7 502.9,412.2 502.9,393.0 516.4,379.5 535.6,379.5 549.1,393.0" fill="#d09a22"/>
<polygon points="545.4,410.6 534.0,422.0 518.0,422.0 506.6,410.6 506.6,394.6 518.0,383.2 534.0,383.2 545.4,394.6" fill="#8a8a8c"/>
<circle cx="526.5" cy="402" r="17.6" fill="#d2d2d4"/>
<circle cx="526.5" cy="402" r="14.6" fill="#4a4a4c"/>
<circle cx="526.5" cy="400.8" r="13.8" fill="#7e7e80"/>
<path d="M512.5 408.8L538.6 396.8" stroke="#333" stroke-width="3"/>
<path d="M498.2 430H553.5V443L551 445V448H548V443.5H504V448H501V445L498.2 443Z" fill="#c0282a"/>
<circle cx="511.9" cy="438.1" r="3.6" fill="#d0d0d0"/>
<path d="M506.9 443.3H516.9V452L513.9 457.6H509.9L506.9 452Z" fill="#8a8a8c"/>
<circle cx="525.9" cy="438.1" r="3.6" fill="#d0d0d0"/>
<path d="M520.9 443.3H530.9V452L527.9 457.6H523.9L520.9 452Z" fill="#8a8a8c"/>
<circle cx="539.9" cy="438.1" r="3.6" fill="#d0d0d0"/>
<path d="M534.9 443.3H544.9V452L541.9 457.6H537.9L534.9 452Z" fill="#8a8a8c"/>
<rect x="505.2" y="459" width="41.7" height="21" fill="#a9c83a" stroke="#34450e" stroke-width="2"/>
<text x="507.3" y="473.2" font-family="Liberation Mono" font-size="15" fill="#111" textLength="37.7" lengthAdjust="spacingAndGlyphs">4.67</text>
<circle cx="519" cy="529.2" r="10" fill="#a99c7c"/><circle cx="519" cy="529.2" r="7.6" fill="#dedede"/>
<circle cx="714.6" cy="529" r="10" fill="#a99c7c"/><circle cx="714.6" cy="529" r="7.6" fill="#dedede"/>
<rect x="560.6" y="494.5" width="97.8" height="12.5" fill="#3c3c3e"/>
<rect x="564.1999999999999" y="497.2" width="7.2" height="7.2" fill="#000"/>
<rect x="578.1999999999999" y="497.2" width="7.2" height="7.2" fill="#000"/>
<rect x="592.1999999999999" y="497.2" width="7.2" height="7.2" fill="#000"/>
<rect x="606.1999999999999" y="497.2" width="7.2" height="7.2" fill="#000"/>
<rect x="620.1999999999999" y="497.2" width="7.2" height="7.2" fill="#000"/>
<rect x="634.1999999999999" y="497.2" width="7.2" height="7.2" fill="#000"/>
<rect x="648.1999999999999" y="497.2" width="7.2" height="7.2" fill="#000"/>
<rect x="560.6" y="537" width="97.8" height="12.5" fill="#3c3c3e"/>
<rect x="564.1999999999999" y="539.1999999999999" width="7.2" height="7.2" fill="#000"/>
<rect x="578.1999999999999" y="539.1999999999999" width="7.2" height="7.2" fill="#000"/>
<rect x="592.1999999999999" y="539.1999999999999" width="7.2" height="7.2" fill="#000"/>
<rect x="606.1999999999999" y="539.1999999999999" width="7.2" height="7.2" fill="#000"/>
<rect x="620.1999999999999" y="539.1999999999999" width="7.2" height="7.2" fill="#000"/>
<rect x="634.1999999999999" y="539.1999999999999" width="7.2" height="7.2" fill="#000"/>
<rect x="648.1999999999999" y="539.1999999999999" width="7.2" height="7.2" fill="#000"/>
<g font-family="Liberation Mono" font-weight="bold" font-size="8.3" fill="#ecf8e6">
<text x="557.6" y="515.8">Vdd</text>
<text x="575.3" y="515.8">RS</text>
<text x="592.5" y="515.8">E</text>
<text x="603" y="515.8">D1</text>
<text x="616.9" y="515.8">D3</text>
<text x="630.8" y="515.8">D5</text>
<text x="645.1" y="515.8">D7</text>
<text x="557.6" y="533.8">Vss</text>
<text x="575.3" y="533.8">VOR/W</text>
<text x="603" y="533.8">D0</text>
<text x="616.9" y="533.8">D2</text>
<text x="630.8" y="533.8">D4</text>
<text x="645.1" y="533.8">D6</text>
</g>
<path d="M524.6 547.3H709.5L719.8 557.7V588C715 590 713 592 713 596V620C713 624 715 627 719.8 627.5V673H514.2V627.5C519 627 520.8 624 520.8 620V596C520.8 592 519 590 514.2 588V557.7Z" fill="#333236"/>
<path d="M505.2 666H532.3V683A13.5 13.5 0 0 1 505.2 683Z" fill="#333236"/>
<path d="M701 666H728.4V683A13.7 13.7 0 0 1 701 683Z" fill="#333236"/>
<circle cx="518.7" cy="683" r="7" fill="#dcdcdc"/><circle cx="714.9" cy="683" r="7" fill="#dcdcdc"/>
<rect x="546.9" y="680.6" width="66" height="13" fill="#2e9e2a" stroke="#55651a" stroke-width="2"/>
<rect x="532.3" y="673" width="168.7" height="7.6" fill="#a8d030"/>
<rect x="532.3" y="679" width="168.7" height="1.6" fill="#6a8a12"/>
<text x="0" y="0" transform="translate(655.5 692.5) rotate(-90)" font-family="Liberation Sans" font-size="7.5" fill="#b5e0a0">NC</text>
<rect x="529.2" y="557.7" width="181.7" height="8.3" rx="4" fill="#4b4b4d" stroke="#242426" stroke-width="1"/>
<rect x="526.3" y="659.5" width="180.6" height="7" rx="3.5" fill="#4b4b4d" stroke="#1e1e20" stroke-width="1.8"/>
<rect x="536.4" y="570.8" width="161.6" height="77.4" rx="6" fill="#86a214"/>
<path d="M543.3 571V648" stroke="#4a5a10" stroke-width="1"/>
<path d="M547.1 579.1h2.93v2.93h-2.93zM558.8 579.1h2.93v2.93h-2.93zM547.1 582.0h2.93v2.93h-2.93zM558.8 582.0h2.93v2.93h-2.93zM547.1 585.0h2.93v2.93h-2.93zM558.8 585.0h2.93v2.93h-2.93zM547.1 587.9h2.93v2.93h-2.93zM558.8 587.9h2.93v2.93h-2.93zM547.1 590.8h2.93v2.93h-2.93zM558.8 590.8h2.93v2.93h-2.93zM550.0 593.8h2.93v2.93h-2.93zM555.9 593.8h2.93v2.93h-2.93zM553.0 596.7h2.93v2.93h-2.93zM564.9 579.1h2.93v2.93h-2.93zM567.8 579.1h2.93v2.93h-2.93zM570.8 579.1h2.93v2.93h-2.93zM573.7 579.1h2.93v2.93h-2.93zM564.9 582.0h2.93v2.93h-2.93zM576.6 582.0h2.93v2.93h-2.93zM564.9 585.0h2.93v2.93h-2.93zM576.6 585.0h2.93v2.93h-2.93zM564.9 587.9h2.93v2.93h-2.93zM567.8 587.9h2.93v2.93h-2.93zM570.8 587.9h2.93v2.93h-2.93zM573.7 587.9h2.93v2.93h-2.93zM564.9 590.8h2.93v2.93h-2.93zM576.6 590.8h2.93v2.93h-2.93zM564.9 593.8h2.93v2.93h-2.93zM576.6 593.8h2.93v2.93h-2.93zM564.9 596.7h2.93v2.93h-2.93zM567.8 596.7h2.93v2.93h-2.93zM570.8 596.7h2.93v2.93h-2.93zM573.7 596.7h2.93v2.93h-2.93zM582.7 579.1h2.93v2.93h-2.93zM585.6 579.1h2.93v2.93h-2.93zM588.6 579.1h2.93v2.93h-2.93zM591.5 579.1h2.93v2.93h-2.93zM582.7 582.0h2.93v2.93h-2.93zM594.4 582.0h2.93v2.93h-2.93zM582.7 585.0h2.93v2.93h-2.93zM594.4 585.0h2.93v2.93h-2.93zM582.7 587.9h2.93v2.93h-2.93zM585.6 587.9h2.93v2.93h-2.93zM588.6 587.9h2.93v2.93h-2.93zM591.5 587.9h2.93v2.93h-2.93zM582.7 590.8h2.93v2.93h-2.93zM594.4 590.8h2.93v2.93h-2.93zM582.7 593.8h2.93v2.93h-2.93zM594.4 593.8h2.93v2.93h-2.93zM582.7 596.7h2.93v2.93h-2.93zM585.6 596.7h2.93v2.93h-2.93zM588.6 596.7h2.93v2.93h-2.93zM591.5 596.7h2.93v2.93h-2.93zM618.3 579.1h2.93v2.93h-2.93zM621.2 579.1h2.93v2.93h-2.93zM624.2 579.1h2.93v2.93h-2.93zM627.1 579.1h2.93v2.93h-2.93zM618.3 582.0h2.93v2.93h-2.93zM630.0 582.0h2.93v2.93h-2.93zM618.3 585.0h2.93v2.93h-2.93zM630.0 585.0h2.93v2.93h-2.93zM618.3 587.9h2.93v2.93h-2.93zM621.2 587.9h2.93v2.93h-2.93zM624.2 587.9h2.93v2.93h-2.93zM627.1 587.9h2.93v2.93h-2.93zM618.3 590.8h2.93v2.93h-2.93zM624.2 590.8h2.93v2.93h-2.93zM618.3 593.8h2.93v2.93h-2.93zM627.1 593.8h2.93v2.93h-2.93zM618.3 596.7h2.93v2.93h-2.93zM630.0 596.7h2.93v2.93h-2.93zM639.0 585.0h2.93v2.93h-2.93zM642.0 585.0h2.93v2.93h-2.93zM644.9 585.0h2.93v2.93h-2.93zM636.1 587.9h2.93v2.93h-2.93zM647.8 587.9h2.93v2.93h-2.93zM636.1 590.8h2.93v2.93h-2.93zM647.8 590.8h2.93v2.93h-2.93zM636.1 593.8h2.93v2.93h-2.93zM647.8 593.8h2.93v2.93h-2.93zM639.0 596.7h2.93v2.93h-2.93zM642.0 596.7h2.93v2.93h-2.93zM644.9 596.7h2.93v2.93h-2.93zM656.8 585.0h2.93v2.93h-2.93zM659.8 585.0h2.93v2.93h-2.93zM662.7 585.0h2.93v2.93h-2.93zM653.9 587.9h2.93v2.93h-2.93zM653.9 590.8h2.93v2.93h-2.93zM653.9 593.8h2.93v2.93h-2.93zM665.6 593.8h2.93v2.93h-2.93zM656.8 596.7h2.93v2.93h-2.93zM659.8 596.7h2.93v2.93h-2.93zM662.7 596.7h2.93v2.93h-2.93zM671.7 579.1h2.93v2.93h-2.93zM671.7 582.0h2.93v2.93h-2.93zM671.7 585.0h2.93v2.93h-2.93zM680.5 585.0h2.93v2.93h-2.93zM671.7 587.9h2.93v2.93h-2.93zM677.6 587.9h2.93v2.93h-2.93zM671.7 590.8h2.93v2.93h-2.93zM674.6 590.8h2.93v2.93h-2.93zM671.7 593.8h2.93v2.93h-2.93zM677.6 593.8h2.93v2.93h-2.93zM671.7 596.7h2.93v2.93h-2.93zM680.5 596.7h2.93v2.93h-2.93zM553.0 610.1h2.93v2.93h-2.93zM555.9 610.1h2.93v2.93h-2.93zM550.0 613.0h2.93v2.93h-2.93zM547.1 616.0h2.93v2.93h-2.93zM547.1 618.9h2.93v2.93h-2.93zM550.0 618.9h2.93v2.93h-2.93zM553.0 618.9h2.93v2.93h-2.93zM555.9 618.9h2.93v2.93h-2.93zM547.1 621.8h2.93v2.93h-2.93zM558.8 621.8h2.93v2.93h-2.93zM547.1 624.8h2.93v2.93h-2.93zM558.8 624.8h2.93v2.93h-2.93zM550.0 627.7h2.93v2.93h-2.93zM553.0 627.7h2.93v2.93h-2.93zM555.9 627.7h2.93v2.93h-2.93zM565 631.3h17v2.7h-17z" fill="#0c2608"/>
<g fill="none" stroke-linejoin="miter">
<path d="M484 543H442V235H946V487H975" stroke="#ff0000" stroke-opacity=".55" stroke-width="6"/>
<path d="M876 235V318" stroke="#ff0000" stroke-opacity=".55" stroke-width="4"/>
<path d="M750 473H975" stroke="#008000" stroke-opacity=".55" stroke-width="6"/>
<path d="M876 431V529H975" stroke="#008000" stroke-opacity=".55" stroke-width="3"/>
<path d="M820 375V501H975" stroke="#0000ff" stroke-opacity=".55" stroke-width="6"/>
<path d="M750 515H975" stroke="#0000ff" stroke-opacity=".55" stroke-width="6"/>
<path d="M750 543H975" stroke="#0000ff" stroke-opacity=".55" stroke-width="6"/>
<path d="M750 612.6H975" stroke="#0000ff" stroke-opacity=".55" stroke-width="6"/>
<path d="M750 626.7H975" stroke="#0000ff" stroke-opacity=".55" stroke-width="6"/>
<path d="M750 641H975" stroke="#0000ff" stroke-opacity=".55" stroke-width="6"/>
<path d="M750 655H975" stroke="#0000ff" stroke-opacity=".55" stroke-width="6"/>
</g>
<circle cx="876" cy="235" r="4.5" fill="#000"/><circle cx="876" cy="473" r="4" fill="#000"/>
<path d="M876 318V333M876 417V431M820 375H848" stroke="#555" stroke-width="1.6" fill="none"/>
<path d="M876 333L869 339L883 354L869 368L883 382L869 396L883 409.5L876 417" stroke="#1a1aff" stroke-width="1.4" fill="none"/>
<path d="M848 368.4L868 375L848 381.7Z" fill="#0000ff"/>
<circle cx="876" cy="318" r="2.3" fill="#111"/><circle cx="876" cy="431" r="2.3" fill="#111"/><circle cx="820" cy="375" r="2.5" fill="#111"/>
<text x="890.3" y="358.2" font-family="Liberation Sans" font-size="16.2" fill="#111" textLength="33.5" lengthAdjust="spacingAndGlyphs">POT</text>
<rect x="1002" y="458.3" width="80" height="211" fill="#a2c43a"/>
<text x="1002" y="442" font-family="Liberation Serif" font-size="15" fill="#111" textLength="52" lengthAdjust="spacingAndGlyphs">LCD 2x8</text>
<path d="M975 472.9H1002M975 486.9H1002M975 500.9H1002M975 514.9H1002M975 528.9H1002M975 542.9H1002M975 556.9H1002M975 570.9H1002M975 584.9H1002M975 598.9H1002M975 612.9H1002M975 626.9H1002M975 640.9H1002M975 654.9H1002" stroke="#595959" stroke-width="2"/>
<g font-family="Liberation Serif" font-size="11.5" fill="#111" text-anchor="end">
<text x="997" y="468.9">14</text>
<text x="997" y="482.9">13</text>
<text x="997" y="496.9">12</text>
<text x="997" y="510.9">2</text>
<text x="997" y="524.9">3</text>
<text x="997" y="538.9">1</text>
<text x="997" y="552.9">4</text>
<text x="997" y="566.9">5</text>
<text x="997" y="580.9">6</text>
<text x="997" y="594.9">7</text>
<text x="997" y="608.9">8</text>
<text x="997" y="622.9">9</text>
<text x="997" y="636.9">10</text>
<text x="997" y="650.9">11</text>
</g><g font-family="Liberation Serif" font-size="8.5" fill="#223010">
<text x="1008" y="472.4">Vss</text>
<text x="1008" y="486.4">Vdd</text>
<text x="1008" y="500.4">Vor</text>
<text x="1008" y="514.4">RS</text>
<text x="1008" y="528.4">R/W</text>
<text x="1008" y="542.4">E</text>
<text x="1008" y="556.4">D0</text>
<text x="1008" y="570.4">D1</text>
<text x="1008" y="584.4">D2</text>
<text x="1008" y="598.4">D3</text>
<text x="1008" y="612.4">D4</text>
<text x="1008" y="626.4">D5</text>
<text x="1008" y="640.4">D6</text>
<text x="1008" y="654.4">D7</text>
</g>
</svg>
</div><!--cvend-->
<div id="rp" class="a">
<div class="a" style="left:96px;top:95px;width:48px;height:48px;background:#107c10"></div>
<div class="a" style="left:10px;top:15px;font-size:19.5px;line-height:22px;color:#8cdc8c;white-space:nowrap">View</div>
<div class="a" style="left:10px;top:148px;font-size:19.5px;line-height:22px;color:#8cdc8c;white-space:nowrap">Project</div>
<svg class="a" style="left:0;top:0" width="297" height="240" viewBox="1069 101 297 240">
<rect x="1085.2" y="160" width="15.8" height="15.8" rx="3" fill="#fff"/>
<rect x="1133" y="160" width="15.8" height="7.3" rx="1.2" fill="#fff"/>
<rect x="1133" y="168.5" width="15.8" height="7.3" rx="1.2" fill="#fff"/>
<rect x="1181" y="160" width="7.3" height="15.8" rx="1.2" fill="#fff"/>
<rect x="1189.5" y="160" width="7.3" height="15.8" rx="1.2" fill="#fff"/>
<rect x="1229.3" y="160" width="15.8" height="4.6" rx="1" fill="#fff"/>
<rect x="1229.3" y="165.6" width="15.8" height="4.6" rx="1" fill="#fff"/>
<rect x="1229.3" y="171.2" width="15.8" height="4.6" rx="1" fill="#fff"/>
<rect x="1277" y="160" width="4.6" height="15.8" rx="1" fill="#fff"/>
<rect x="1282.6" y="160" width="4.6" height="15.8" rx="1" fill="#fff"/>
<rect x="1288.2" y="160" width="4.6" height="15.8" rx="1" fill="#fff"/>
<rect x="1085.2" y="208.2" width="15.8" height="10" rx="1.2" fill="#fff"/>
<rect x="1085.2" y="219.39999999999998" width="15.8" height="4.6" rx="1" fill="#fff"/>
<rect x="1133" y="208.2" width="7.3" height="10" rx="1" fill="#fff"/>
<rect x="1141.5" y="208.2" width="7.3" height="10" rx="1" fill="#fff"/>
<rect x="1133" y="219.39999999999998" width="15.8" height="4.6" rx="1" fill="#fff"/>
<rect x="1181" y="208.2" width="7.3" height="15.8" rx="1.2" fill="#fff"/>
<rect x="1189.5" y="208.2" width="7.3" height="15.8" rx="1.2" fill="#fff"/>
<rect x="1229.3" y="208.2" width="7.3" height="7.3" rx="1" fill="#fff"/>
<rect x="1237.8" y="208.2" width="7.3" height="7.3" rx="1" fill="#fff"/>
<rect x="1229.3" y="216.7" width="7.3" height="7.3" rx="1" fill="#fff"/>
<rect x="1237.8" y="216.7" width="7.3" height="7.3" rx="1" fill="#fff"/>
<g fill="none" stroke="#fff" stroke-width="1.1">
<rect x="1097.5" y="295.5" width="11" height="11"/>
<path d="M1099.5 293v2.5M1102 293v2.5M1104.5 293v2.5M1107 293v2.5M1099.5 306.5v2.5M1102 306.5v2.5M1104.5 306.5v2.5M1107 306.5v2.5M1095 297.5h2.5M1095 300h2.5M1095 302.5h2.5M1095 305h2.5M1108.5 297.5h2.5M1108.5 300h2.5M1108.5 302.5h2.5M1108.5 305h2.5"/>
</g>
<g fill="none" stroke="#e6e6e6" stroke-width="1.3" stroke-linecap="round">
<path d="M1172.5 289.2c-3 2.2 1.8 3.6-0.8 6.8M1175 292c-2 1.3 1 2.4-0.6 4.2"/>
<path d="M1166.8 298.8h9.6v1.8c0 2.6-2.2 3.6-4.8 3.6s-4.8-1-4.8-3.6z" fill="#e6e6e6"/>
<path d="M1176.4 299.6c2.2-.2 2.4 2.4-.6 3"/>
<path d="M1165 305.8c3.8 1.4 9.6 1.4 13.4 0"/>
</g>
<path d="M1239 305.5c1.5-1 2.5 0 3.5.5h2l1.5-11 2.5 14 1.5-3h5" fill="none" stroke="#fff" stroke-width="1.2"/>
<g fill="none" stroke="#fff" stroke-width="1.2">
<path d="M1311.5 294v14.5h15.5v-13h-5v13"/>
<path d="M1311.5 294l14.5 14.5"/>
<path d="M1314.5 300.5v5h5z"/>
<path d="M1323.5 298h2M1323.5 300.5h2M1323.5 303h2M1323.5 305.5h2"/>
</g>
<g stroke="#7ccf7c" stroke-width="2">
<path d="M1111.2 292.7h16M1119.2 284.7v16"/>
<path d="M1183 292.7h16M1191 284.7v16"/>
<path d="M1255 292.7h16M1263 284.7v16"/>
</g>
<path d="M1326.5 295.5h9M1331 291v9" stroke="#7ccf7c" stroke-width="1"/>
</svg>
<div class="a tb" style="left:-6px;top:214px;width:80px;line-height:14px;font-size:11.6px;color:#fff">Breadboard</div>
<div class="a tb" style="left:66px;top:214px;width:80px;line-height:14px;font-size:11.6px;color:#fff">Java Code</div>
<div class="a tb" style="left:138px;top:214px;width:80px;line-height:14px;font-size:11.6px;color:#fff">DSO</div>
<div class="a tb" style="left:210px;top:214px;width:80px;line-height:14px;font-size:11.6px;color:#fff">CDK</div>
<div class="a" style="left:75px;top:240px;width:146px;height:100px;background:#45535a"></div>
<div class="a" style="left:75px;top:344px;width:146px;height:100px;background:#45535a"></div>
<div class="a" style="left:75px;top:448px;width:146px;height:100px;background:#45535a"></div>
<svg class="a" style="left:75px;top:240px" width="146" height="308" viewBox="1144 341 146 308">
<circle cx="1218.9" cy="391" r="19" fill="#fff"/>
<circle cx="1219.6" cy="381" r="2.3" fill="#45535a"/>
<path d="M1214.3 386h7.2v13.2h3.4v3h-10.6v-3h3.4v-10.2h-3.4z" fill="#45535a"/>
<rect x="1194.6" y="470.5" width="48.4" height="48" fill="#fff"/>
<path d="M1198 474h41.5M1198 515.5h41.5" stroke="#45535a" stroke-width="1"/>
<rect x="1204.7" y="486.2" width="28.5" height="17.1" rx="2.5" fill="#45535a"/>
<path d="M1199 494.7h5.7M1233.2 494.7h5.7" stroke="#45535a" stroke-width="1"/>
<rect x="1208.5" y="481" width="3.4" height="5.5" rx="1.2" fill="#45535a"/><rect x="1208.5" y="503" width="3.4" height="5.5" rx="1.2" fill="#45535a"/>
<rect x="1215.5" y="481" width="3.4" height="5.5" rx="1.2" fill="#45535a"/><rect x="1215.5" y="503" width="3.4" height="5.5" rx="1.2" fill="#45535a"/>
<rect x="1222.5" y="481" width="3.4" height="5.5" rx="1.2" fill="#45535a"/><rect x="1222.5" y="503" width="3.4" height="5.5" rx="1.2" fill="#45535a"/>
<rect x="1229.5" y="481" width="3.4" height="5.5" rx="1.2" fill="#45535a"/><rect x="1229.5" y="503" width="3.4" height="5.5" rx="1.2" fill="#45535a"/>
<path d="M1205.5 492v5.5l2-2.75z" fill="#fff"/>
</svg>
<div class="a" style="left:115.5px;top:468px;font-size:36px;line-height:40px;color:#f0f0f0;white-space:nowrap;transform:scaleX(.84);transform-origin:0 0">Java</div>
</div><!--rpend-->
</body></html>
